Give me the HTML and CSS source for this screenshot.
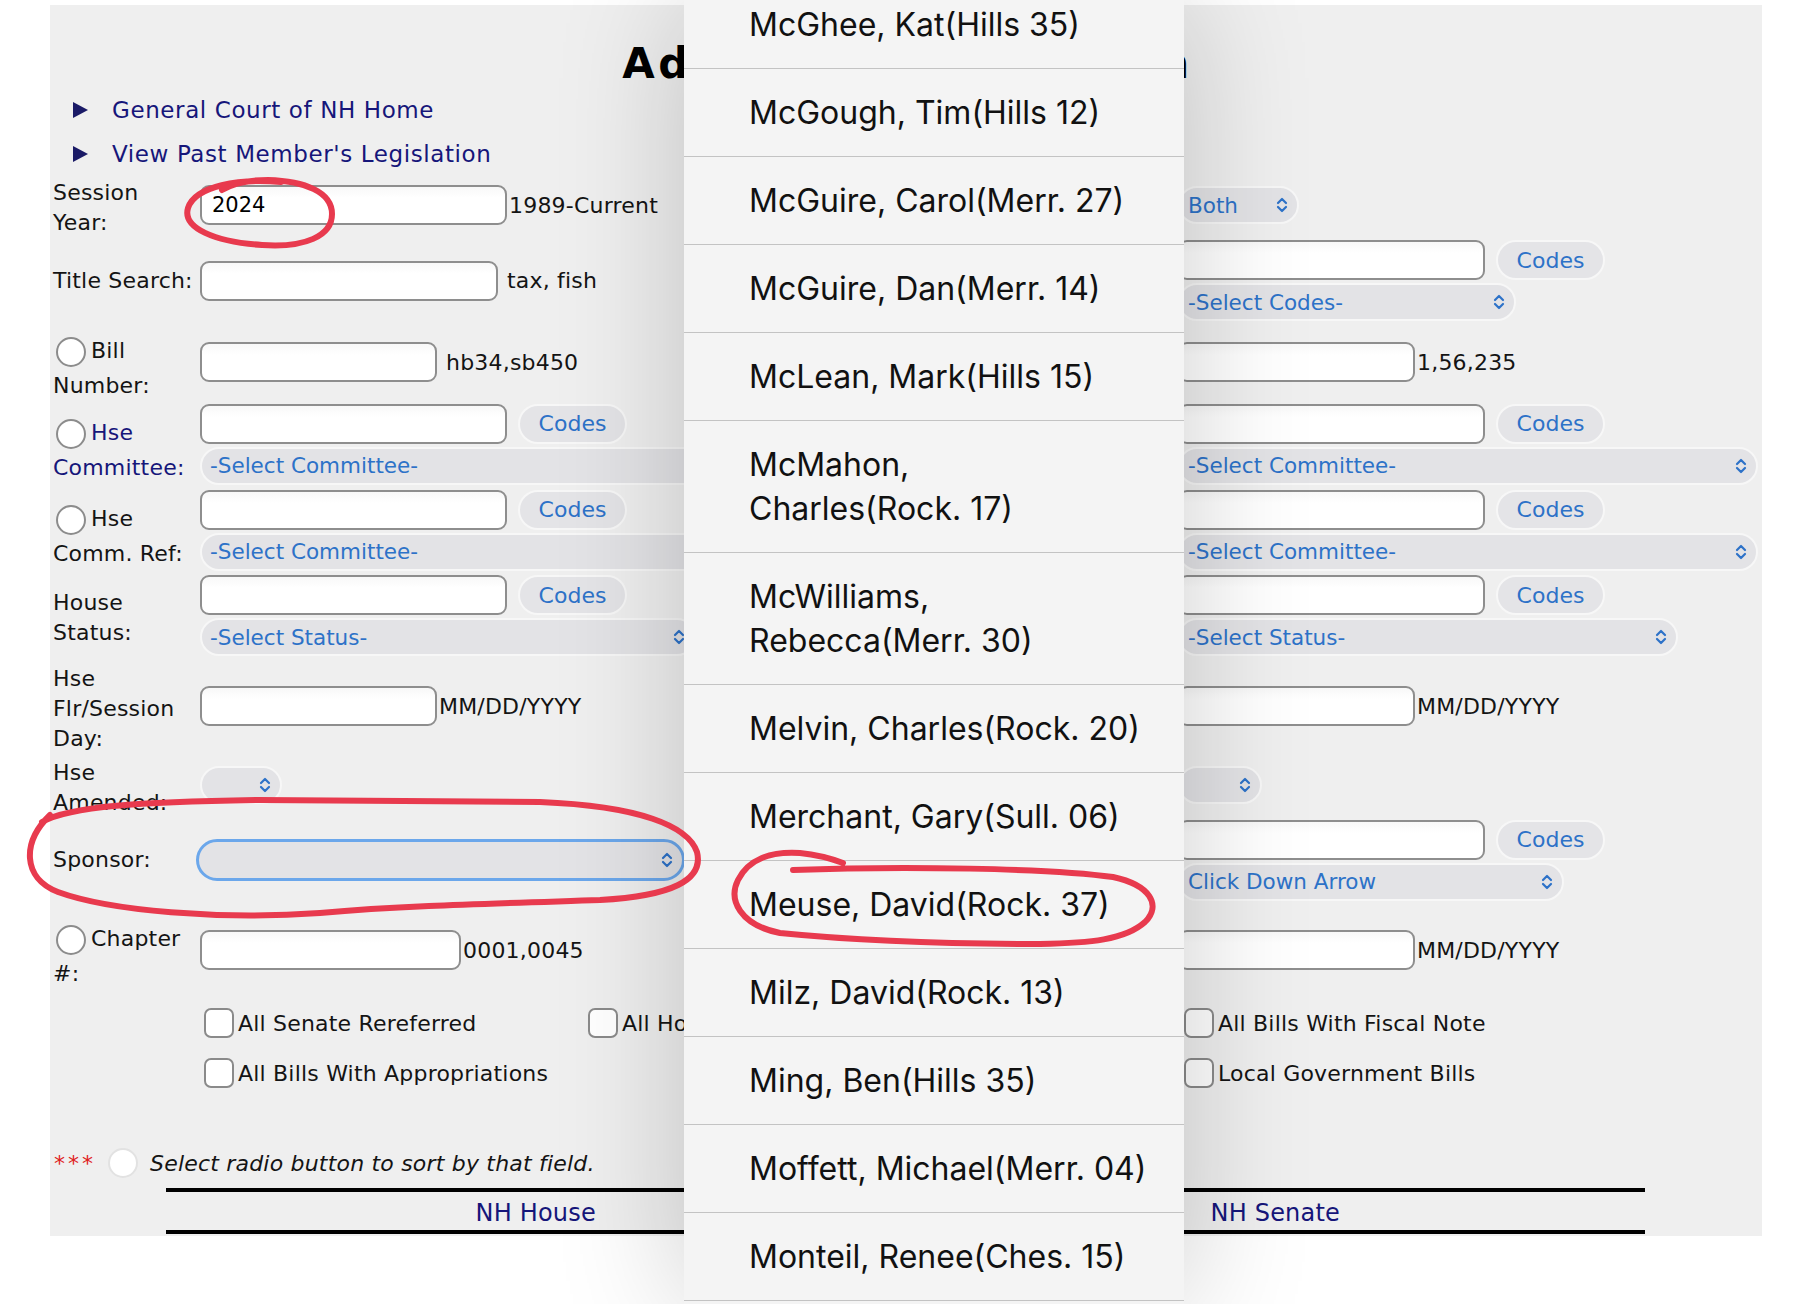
FILE: index.html
```html
<html>
  <head>
    <meta name="viewport" content="width=device-width, initial-scale=1" />
    <title>Advanced Bill Search</title>
    <link rel="stylesheet" href="styles.css">
  </head>
  <body>
    <div class="page">
      <div class="search-panel">
        <h1 class="page-title">Advanced Bill Search</h1>
        <ul class="nav-links">
          <li><a href="#">General Court of NH Home</a></li>
          <li><a href="#">View Past Member's Legislation</a></li>
        </ul>

        <form class="search-form">
          <div class="field-grid">
            <!-- session -->
            <div class="label multi">Session<br>Year:</div>
            <div class="cell"><input class="text w-long" type="text" value="2024"><span class="hint">1989-Current</span></div>
            <div class="label"></div>
            <div class="cell">
              <span class="pick w-both"><select><option>Both</option><option>House</option><option>Senate</option></select><svg viewBox="0 0 12 18"><path d="M2 7 6 3 10 7M2 11 6 15 10 11"/></svg></span>
            </div>

            <!-- title / subject -->
            <div class="label">Title Search:</div>
            <div class="cell"><input class="text w-title" type="text"><span class="hint spaced">tax, fish</span></div>
            <div class="label"></div>
            <div class="stack">
              <div class="line"><input class="text w-long" type="text"><button class="codes" type="button">Codes</button></div>
              <span class="pick w-codes"><select><option>-Select Codes-</option></select><svg viewBox="0 0 12 18"><path d="M2 7 6 3 10 7M2 11 6 15 10 11"/></svg></span>
            </div>

            <!-- bill number -->
            <div class="label radio"><input class="sort-radio" type="radio" name="sort">Bill<br>Number:</div>
            <div class="cell"><input class="text w-short" type="text"><span class="hint spaced">hb34,sb450</span></div>
            <div class="label"></div>
            <div class="cell"><input class="text w-short" type="text"><span class="hint">1,56,235</span></div>

            <!-- house committee -->
            <div class="label radio label-link"><input class="sort-radio" type="radio" name="sort">Hse<br>Committee:</div>
            <div class="stack">
              <div class="line"><input class="text w-long" type="text"><button class="codes" type="button">Codes</button></div>
              <span class="pick w-comm"><select><option>-Select Committee-</option></select><svg viewBox="0 0 12 18"><path d="M2 7 6 3 10 7M2 11 6 15 10 11"/></svg></span>
            </div>
            <div class="label"></div>
            <div class="stack">
              <div class="line"><input class="text w-long" type="text"><button class="codes" type="button">Codes</button></div>
              <span class="pick w-comm"><select><option>-Select Committee-</option></select><svg viewBox="0 0 12 18"><path d="M2 7 6 3 10 7M2 11 6 15 10 11"/></svg></span>
            </div>

            <!-- committee referral -->
            <div class="label radio"><input class="sort-radio" type="radio" name="sort">Hse<br>Comm. Ref:</div>
            <div class="stack">
              <div class="line"><input class="text w-long" type="text"><button class="codes" type="button">Codes</button></div>
              <span class="pick w-comm"><select><option>-Select Committee-</option></select><svg viewBox="0 0 12 18"><path d="M2 7 6 3 10 7M2 11 6 15 10 11"/></svg></span>
            </div>
            <div class="label"></div>
            <div class="stack">
              <div class="line"><input class="text w-long" type="text"><button class="codes" type="button">Codes</button></div>
              <span class="pick w-comm"><select><option>-Select Committee-</option></select><svg viewBox="0 0 12 18"><path d="M2 7 6 3 10 7M2 11 6 15 10 11"/></svg></span>
            </div>

            <!-- status -->
            <div class="label multi">House<br>Status:</div>
            <div class="stack">
              <div class="line"><input class="text w-long" type="text"><button class="codes" type="button">Codes</button></div>
              <span class="pick w-status"><select><option>-Select Status-</option></select><svg viewBox="0 0 12 18"><path d="M2 7 6 3 10 7M2 11 6 15 10 11"/></svg></span>
            </div>
            <div class="label"></div>
            <div class="stack">
              <div class="line"><input class="text w-long" type="text"><button class="codes" type="button">Codes</button></div>
              <span class="pick w-status-r"><select><option>-Select Status-</option></select><svg viewBox="0 0 12 18"><path d="M2 7 6 3 10 7M2 11 6 15 10 11"/></svg></span>
            </div>

            <!-- floor date -->
            <div class="label multi">Hse<br>Flr/Session<br>Day:</div>
            <div class="cell"><input class="text w-short" type="text"><span class="hint">MM/DD/YYYY</span></div>
            <div class="label"></div>
            <div class="cell"><input class="text w-short" type="text"><span class="hint">MM/DD/YYYY</span></div>

            <!-- amended -->
            <div class="label multi">Hse<br>Amended:</div>
            <div class="cell"><span class="pick w-tiny"><select><option></option><option>Yes</option><option>No</option></select><svg viewBox="0 0 12 18"><path d="M2 7 6 3 10 7M2 11 6 15 10 11"/></svg></span></div>
            <div class="label"></div>
            <div class="cell"><span class="pick w-tiny-r"><select><option></option><option>Yes</option><option>No</option></select><svg viewBox="0 0 12 18"><path d="M2 7 6 3 10 7M2 11 6 15 10 11"/></svg></span></div>

            <!-- sponsor -->
            <div class="label">Sponsor:</div>
            <div class="cell"><span class="pick w-sponsor focused"><select><option></option></select><svg viewBox="0 0 12 18"><path d="M2 7 6 3 10 7M2 11 6 15 10 11"/></svg></span></div>
            <div class="label"></div>
            <div class="stack">
              <div class="line"><input class="text w-long" type="text"><button class="codes" type="button">Codes</button></div>
              <span class="pick w-arrow"><select><option>Click Down Arrow</option></select><svg viewBox="0 0 12 18"><path d="M2 7 6 3 10 7M2 11 6 15 10 11"/></svg></span>
            </div>

            <!-- chapter -->
            <div class="label radio"><input class="sort-radio" type="radio" name="sort">Chapter<br>#:</div>
            <div class="cell"><input class="text w-chap" type="text"><span class="hint">0001,0045</span></div>
            <div class="label"></div>
            <div class="cell"><input class="text w-short" type="text"><span class="hint">MM/DD/YYYY</span></div>
          </div>

          <div class="check-grid">
            <label class="check"><input type="checkbox">All Senate Rereferred</label>
            <label class="check"><input type="checkbox">All House Rereferred</label>
            <label class="check"><input type="checkbox">All Bills With Fiscal Note</label>
            <label class="check"><input type="checkbox">All Bills With Appropriations</label>
            <span></span>
            <label class="check"><input type="checkbox">Local Government Bills</label>
          </div>

          <p class="sort-note"><span class="stars">***</span><input class="sort-radio faint" type="radio" disabled><em>Select radio button to sort by that field.</em></p>
        </form>

        <div class="chamber-bar">
          <a href="#">NH House</a>
          <a href="#">NH Senate</a>
        </div>
      </div>

      <!-- open sponsor list -->
      <div class="picker">
        <ul>
          <li>McGhee, Kat(Hills 35)</li>
          <li>McGough, Tim(Hills 12)</li>
          <li>McGuire, Carol(Merr. 27)</li>
          <li>McGuire, Dan(Merr. 14)</li>
          <li>McLean, Mark(Hills 15)</li>
          <li>McMahon,<br>Charles(Rock. 17)</li>
          <li>McWilliams,<br>Rebecca(Merr. 30)</li>
          <li>Melvin, Charles(Rock. 20)</li>
          <li>Merchant, Gary(Sull. 06)</li>
          <li>Meuse, David(Rock. 37)</li>
          <li>Milz, David(Rock. 13)</li>
          <li>Ming, Ben(Hills 35)</li>
          <li>Moffett, Michael(Merr. 04)</li>
          <li>Monteil, Renee(Ches. 15)</li>
        </ul>
      </div>

      <!-- pen marks -->
      <svg class="marks" viewBox="0 0 1794 1304">
        <path d="M281 182C240 178 195 186 188 208C182 228 215 242 262 245C305 248 332 236 332 214C332 192 305 181 268 180C248 180 232 184 222 190"/>
        <path d="M42 822C70 806 140 802 260 800L540 802C640 806 688 826 697 852C704 880 672 896 600 900C480 904 400 906 320 913C220 920 110 911 58 892C22 878 22 842 50 815"/>
        <path d="M793 870C900 866 1050 868 1113 877C1150 885 1162 905 1145 922C1125 940 1090 943 1040 944C950 944 850 940 780 933C740 925 728 900 738 880C748 860 770 851 800 853C820 855 835 860 843 863"/>
      </svg>
    </div>
  </body>
</html>
```

FILE: styles.css
```css
body {
  margin: 0;
  background: #fff;
  font-family: "DejaVu Sans", Verdana, sans-serif;
  font-size: 22px;
  letter-spacing: 0.2px;
  color: #141414;
}
.page {
  position: relative;
  width: 1794px;
  height: 1304px;
  overflow: hidden;
}
.search-panel {
  margin: 5px 0 0 50px;
  width: 1709px;
  padding: 0 0 2px 3px;
  background: #efefef;
}
.page-title {
  margin: 0;
  padding-top: 34px;
  font-size: 42px;
  line-height: 49px;
  letter-spacing: 3.6px;
  text-align: center;
  color: #000;
}
.nav-links {
  list-style: none;
  margin: 0;
  padding: 0 0 0 20px;
  line-height: 44px;
}
.nav-links li {
  display: flex;
  align-items: center;
}
.nav-links li::before {
  content: "";
  border-left: 15px solid #1a1a66;
  border-top: 8px solid transparent;
  border-bottom: 8px solid transparent;
  margin-right: 24px;
}
.nav-links a {
  color: #16167a;
  text-decoration: none;
  font-size: 23px;
  letter-spacing: 0.6px;
}
.search-form {
  margin: 0;
}

/* main form grid: label | house field | label | senate field */
.field-grid {
  display: grid;
  grid-template-columns: 147px 700px 278px 1fr;
  grid-template-rows: 58px 93px 70px 94px 78px 93px 88px 70px 80px 100px;
  align-items: center;
}
.label {
  line-height: 30px;
}
.label.multi {
  padding-top: 5px;
}
.label.radio {
  padding-top: 9px;
}
.label-link {
  color: #16167a;
}
.cell,
.line {
  display: flex;
  align-items: center;
}
.stack {
  display: flex;
  flex-direction: column;
  align-items: flex-start;
  gap: 3px;
}
.sort-radio {
  appearance: none;
  box-sizing: border-box;
  width: 30px;
  height: 30px;
  margin: 4px 5px 4px 3px;
  border: 2.5px solid #8c8c8c;
  border-radius: 50%;
  background: #fff;
  vertical-align: middle;
}
.sort-radio.faint {
  border-color: #e2e2e2;
  margin: 0 12px 0 0;
}
.text {
  appearance: none;
  box-sizing: border-box;
  height: 40px;
  margin: 0;
  padding: 0 10px;
  border: 2px solid #8e8e8e;
  border-radius: 9px;
  background: linear-gradient(#f8f8f8, #fff 30%);
  font: 21px "DejaVu Sans", sans-serif;
  color: #000;
}
.w-long { width: 307px; }
.w-title { width: 298px; }
.w-short { width: 237px; }
.w-chap { width: 261px; }
.hint {
  margin-left: 2px;
}
.hint.spaced {
  margin-left: 9px;
}
.codes {
  appearance: none;
  box-sizing: border-box;
  width: 109px;
  height: 40px;
  margin: 0 0 0 11px;
  padding: 0;
  border: 2px solid #f7f7f7;
  border-radius: 20px;
  background: #e4e4e7;
  font: 22px "DejaVu Sans", sans-serif;
  color: #2d72c8;
}

/* pill selects */
.pick {
  display: inline-flex;
  align-items: center;
  box-sizing: border-box;
  height: 38px;
  padding: 0 9px 0 8px;
  border: 2px solid #f7f7f7;
  border-radius: 19px;
  background: #e3e3e6;
  color: #2d72c8;
}
.pick select {
  appearance: none;
  flex: 1;
  min-width: 0;
  margin: 0;
  padding: 0;
  border: 0;
  background: transparent;
  font: 21.5px "DejaVu Sans", sans-serif;
  color: inherit;
  outline: none;
}
.pick svg {
  flex: none;
  width: 12px;
  height: 18px;
  fill: none;
  stroke: currentColor;
  stroke-width: 2.2;
  stroke-linecap: round;
  stroke-linejoin: round;
}
.pick.focused {
  height: 42px;
  border: 3px solid #6ba7eb;
  border-radius: 21px;
  margin-left: -4px;
}
.w-both { width: 121px; }
.w-codes { width: 338px; }
.w-comm { width: 580px; }
.w-status { width: 496px; }
.w-status-r { width: 500px; }
.w-tiny { width: 82px; }
.w-tiny-r { width: 84px; }
.w-sponsor { width: 489px; }
.w-arrow { width: 386px; }

.check-grid {
  display: grid;
  grid-template-columns: 384px 596px auto;
  grid-auto-rows: 50px;
  align-items: center;
  margin: -2px 0 0 151px;
}
.check {
  display: flex;
  align-items: center;
}
.check input {
  appearance: none;
  box-sizing: border-box;
  width: 30px;
  height: 30px;
  margin: 0 4px 0 0;
  border: 2.5px solid #8a8a8a;
  border-radius: 7px;
  background: #fff;
}
.sort-note {
  display: flex;
  align-items: center;
  height: 40px;
  margin: 45px 0 0 1px;
  font-size: 22px;
}
.sort-note .stars {
  color: #e02020;
  letter-spacing: 3px;
  margin-right: 12px;
}
.chamber-bar {
  display: grid;
  grid-template-columns: 1fr 1fr;
  width: 1479px;
  margin: 5px 0 0 113px;
  border-top: 4px solid #000;
  border-bottom: 4px solid #000;
}
.chamber-bar a {
  text-align: center;
  line-height: 38px;
  padding-top: 2px;
  margin-bottom: -2px;
  font-size: 24px;
  color: #16167a;
  text-decoration: none;
}

/* open sponsor list, drawn over the form */
.picker {
  position: absolute;
  left: 684px;
  top: 0;
  width: 500px;
  height: 1304px;
  overflow: hidden;
  background: #f4f4f4;
  box-shadow: 0 0 120px rgba(0, 0, 0, 0.2);
  font-family: Inter, "Liberation Sans", sans-serif;
}
.picker ul {
  list-style: none;
  margin: -19px 0 0;
  padding: 0;
}
.picker li {
  padding: 22px 10px 21px 65px;
  line-height: 44px;
  border-bottom: 1px solid #c3c3c3;
  font-size: 32px;
  letter-spacing: 0;
  color: #111;
  white-space: nowrap;
}
.marks {
  position: absolute;
  left: 0;
  top: 0;
  width: 1794px;
  height: 1304px;
  pointer-events: none;
}
.marks path {
  fill: none;
  stroke: #e83a4e;
  stroke-width: 6;
  stroke-linecap: round;
  stroke-linejoin: round;
}
```
